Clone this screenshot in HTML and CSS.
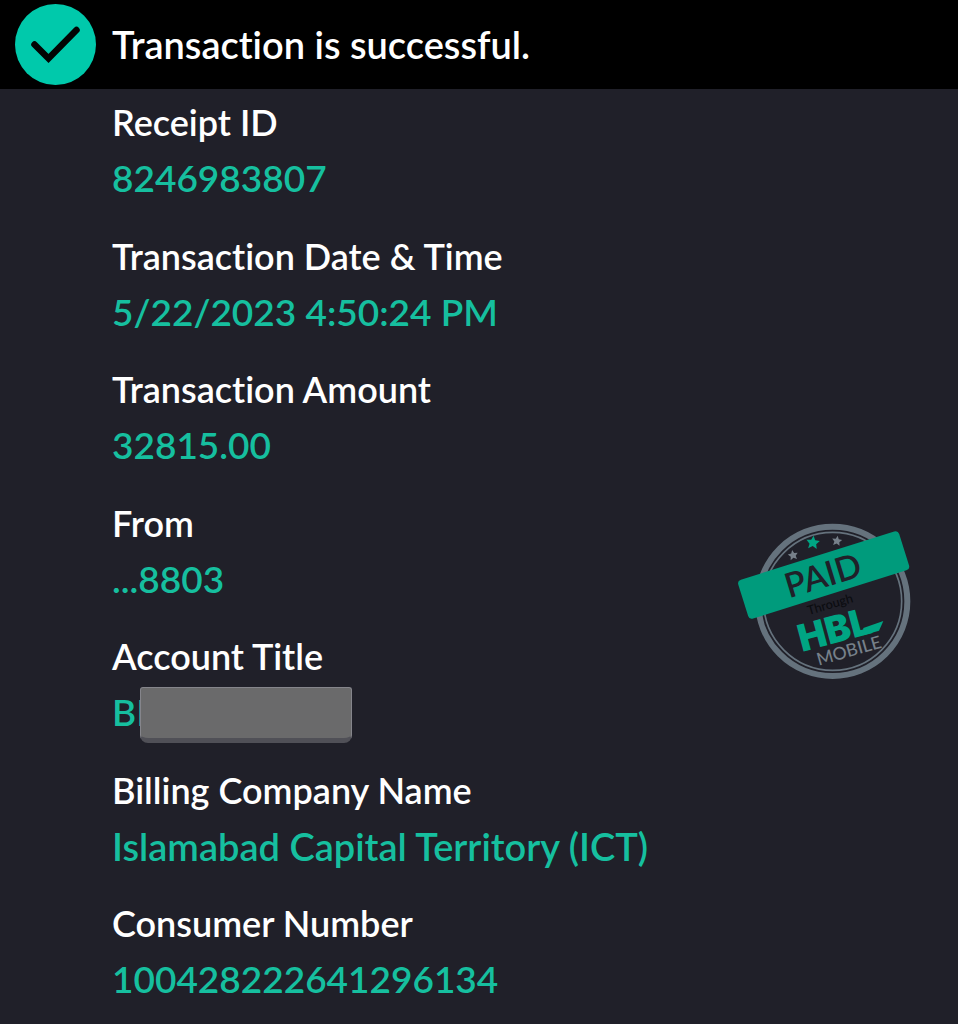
FILE: index.html
```html
<!DOCTYPE html>
<html lang="en">
<head>
<meta charset="utf-8">
<meta name="viewport" content="width=device-width, initial-scale=1">
<title>Transaction receipt</title>
<link rel="stylesheet" href="styles.css">
</head>
<body>
<header class="banner">
  <svg class="banner-icon" viewBox="0 0 81 81" aria-hidden="true">
    <circle cx="40.500" cy="40.500" r="40.500" fill="#00c9ab"/>
    <path d="M19.500 40.500 33.500 54.500 61.500 26" fill="none" stroke="#020403" stroke-width="6.500" stroke-linecap="round" stroke-linejoin="miter"/>
  </svg>
  <h1 class="banner-title">Transaction is successful.</h1>
</header>
<main class="receipt">
  <dl class="details">
    <div class="item"><dt>Receipt ID</dt><dd>8246983807</dd></div>
    <div class="item"><dt>Transaction Date &amp; Time</dt><dd>5/22/2023 4:50:24 PM</dd></div>
    <div class="item"><dt>Transaction Amount</dt><dd>32815.00</dd></div>
    <div class="item"><dt>From</dt><dd>...8803</dd></div>
    <div class="item"><dt>Account Title</dt><dd class="masked">BI<span class="mask"></span></dd></div>
    <div class="item"><dt>Billing Company Name</dt><dd class="company">Islamabad Capital Territory (ICT)</dd></div>
    <div class="item"><dt>Consumer Number</dt><dd>100428222641296134</dd></div>
  </dl>
  <svg class="stamp" viewBox="0 0 600 540" role="img" aria-label="Paid through HBL Mobile">
    <defs>
      <path id="star" d="M0-20 6-7 20-6 10 5 13 19 0 11-13 19-10 5-20-6-6-7Z"/>
    </defs>
    <circle cx="323" cy="274" r="224" fill="none" stroke="#65727d" stroke-width="18"/>
    <circle cx="323" cy="274" r="207" fill="none" stroke="#65727d" stroke-width="5"/>
    <use href="#star" transform="translate(204 135) rotate(-10) scale(.75)" fill="#77808a"/>
    <use href="#star" transform="translate(264 97) rotate(5)" fill="#00a583"/>
    <use href="#star" transform="translate(336 92) rotate(8) scale(.75)" fill="#77808a"/>
    <rect x="43" y="134" width="506" height="122" rx="12" fill="#009b7c" transform="rotate(-17.500 296 195)"/>
    <text class="stamp-paid" transform="translate(192 265) rotate(-17)">PAID</text>
    <text class="stamp-through" transform="translate(251 315) rotate(-16)">Through</text>
    <text class="stamp-brand" transform="translate(231 426) rotate(-15)">HBL</text>
    <text class="stamp-mobile" transform="translate(281 467) rotate(-16)">MOBILE</text>
    <path d="M415 354 475 333 462 362 415 376Z" fill="#00a583"/>
  </svg>
</main>
</body>
</html>
```
FILE: styles.css
```css
* { box-sizing: border-box; }

body {
  margin: 0;
  min-height: 100vh;
  display: flex;
  flex-direction: column;
  background: #202029;
  color: #fff;
  font-family: Lato, "Noto Sans", sans-serif;
  font-weight: 600;
  font-variant-ligatures: none;
}

.banner {
  display: flex;
  align-items: center;
  gap: 16px;
  padding: 4px 15px;
  background: #000;
}

.banner-icon {
  display: block;
  flex: none;
  width: 81px;
}

.banner-title {
  margin: 0;
  padding-bottom: 2px;
  font-size: 38px;
  line-height: 48px;
  font-weight: 600;
}

.receipt {
  position: relative;
  flex: 1;
  display: flex;
}

.details {
  flex: 1;
  display: grid;
  grid-auto-rows: 1fr;
  margin: 0;
  padding-left: 112px;
}

.item { padding-top: 5px; }

dt {
  font-size: 36px;
  line-height: 56px;
}

dd {
  margin: 0;
  color: #16bf9f;
  font-size: 37px;
  line-height: 56px;
}

.company { font-size: 38px; }

.masked {
  position: relative;
  width: max-content;
}

.mask {
  position: absolute;
  left: 28px;
  top: 3px;
  width: 212px;
  height: 56px;
  border: 1px solid #85858b;
  border-bottom: 5px solid #505057;
  border-radius: 3px 3px 8px 8px;
  background: #6a6a6b;
}

.stamp {
  position: absolute;
  right: 33px;
  top: 421px;
  width: 200px;
}

.stamp-paid {
  font-size: 102px;
  font-weight: 600;
  fill: #202029;
}

.stamp-through {
  font-size: 38px;
  font-weight: 500;
  fill: #0b0c10;
}

.stamp-brand {
  font-family: Inter, sans-serif;
  font-size: 112px;
  font-weight: 900;
  fill: #00a583;
}

.stamp-mobile {
  font-size: 53px;
  font-weight: 500;
  fill: #77808a;
}
```
